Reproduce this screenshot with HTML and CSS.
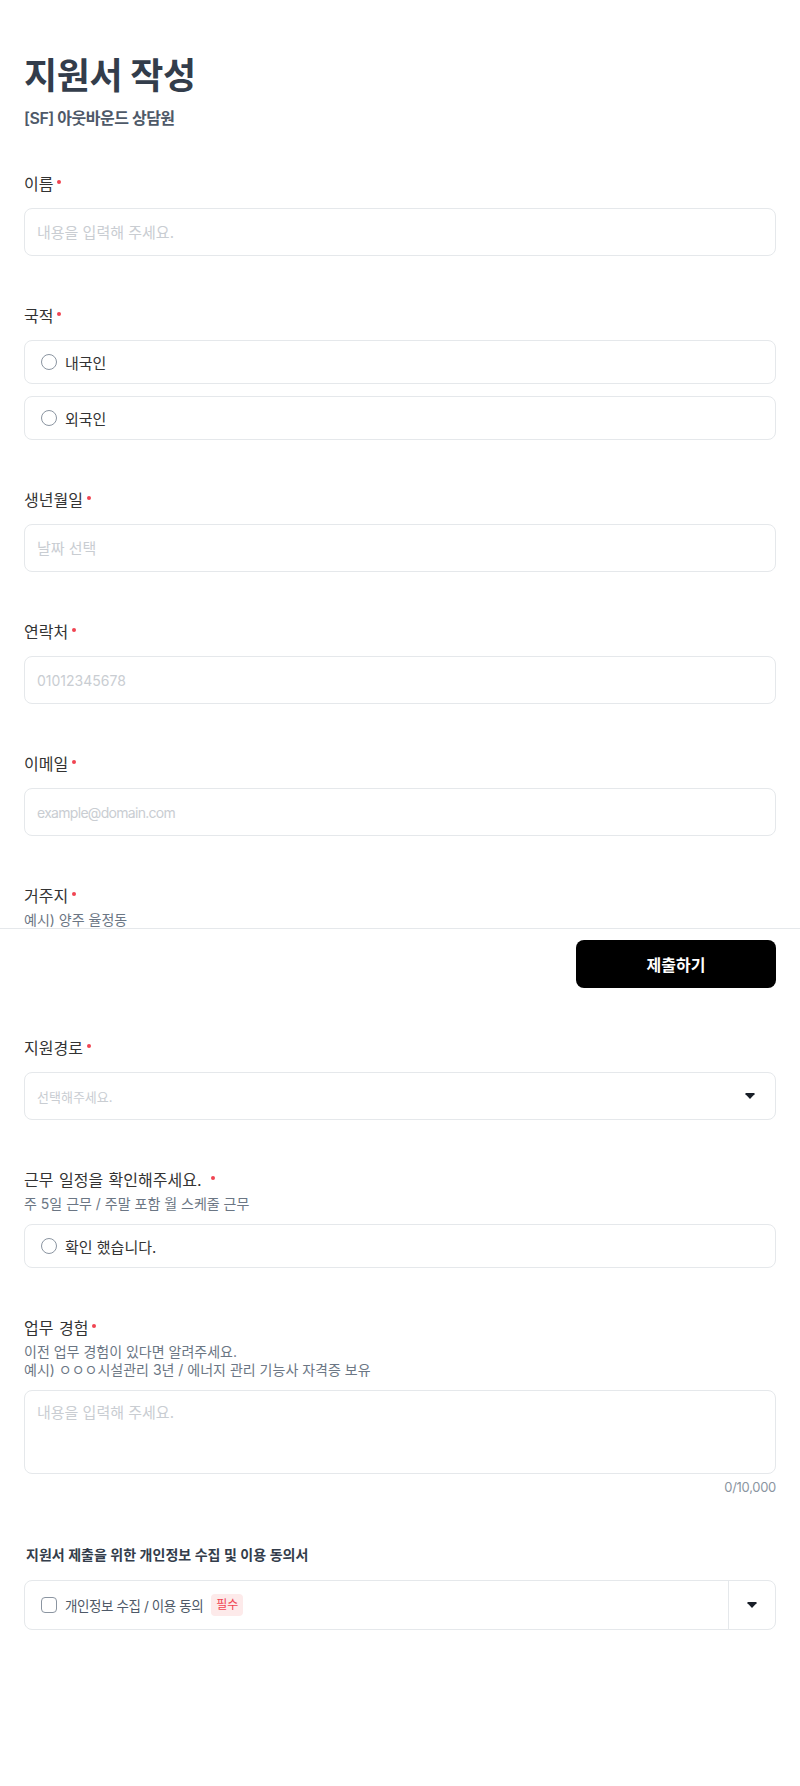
FILE: index.html
```html
<html lang="ko">
<head>
  <meta charset="UTF-8">
  <meta name="viewport" content="width=device-width, initial-scale=1.0">
  <title>지원서 작성</title>
  <link rel="stylesheet" href="styles.css">
</head>
<body>
  <div class="page">
    <header class="head">
      <h1 class="title">지원서 작성</h1>
      <p class="subtitle">[SF] 아웃바운드 상담원</p>
    </header>

    <form class="form">
      <!-- 이름 -->
      <div class="field">
        <div class="label">이름<span class="req"></span></div>
        <input class="input" type="text" placeholder="내용을 입력해 주세요.">
      </div>

      <!-- 국적 -->
      <div class="field">
        <div class="label">국적<span class="req"></span></div>
        <div class="options">
          <label class="option"><span class="radio"></span>내국인</label>
          <label class="option"><span class="radio"></span>외국인</label>
        </div>
      </div>

      <!-- 생년월일 -->
      <div class="field">
        <div class="label">생년월일<span class="req"></span></div>
        <input class="input" type="text" placeholder="날짜 선택">
      </div>

      <!-- 연락처 -->
      <div class="field">
        <div class="label">연락처<span class="req"></span></div>
        <input class="input input-latin" type="text" placeholder="01012345678">
      </div>

      <!-- 이메일 -->
      <div class="field">
        <div class="label">이메일<span class="req"></span></div>
        <input class="input input-latin input-email" type="text" placeholder="example@domain.com">
      </div>

      <!-- 거주지 (submit bar sits on top of it) -->
      <div class="field field-address">
        <div class="label">거주지<span class="req"></span></div>
        <p class="help">예시) 양주 율정동</p>
        <input class="input" type="text" placeholder="내용을 입력해 주세요.">
        <div class="action-bar">
          <button type="button" class="submit">제출하기</button>
        </div>
      </div>

      <!-- 지원경로 -->
      <div class="field">
        <div class="label">지원경로<span class="req"></span></div>
        <div class="select">
          <span class="select-text">선택해주세요.</span>
          <svg class="caret" width="10" height="6" viewBox="0 0 10 6"><path d="M0.5 0h9v1.2L5 6 0.5 1.2z"/></svg>
        </div>
      </div>

      <!-- 근무 일정 -->
      <div class="field">
        <div class="label">근무 일정을 확인해주세요. <span class="req"></span></div>
        <p class="help">주 5일 근무 / 주말 포함 월 스케줄 근무</p>
        <div class="options">
          <label class="option"><span class="radio"></span>확인 했습니다.</label>
        </div>
      </div>

      <!-- 업무 경험 -->
      <div class="field field-last">
        <div class="label">업무 경험<span class="req"></span></div>
        <p class="help">이전 업무 경험이 있다면 알려주세요.<br>예시) ㅇㅇㅇ시설관리 3년 / 에너지 관리 기능사 자격증 보유</p>
        <textarea class="textarea" placeholder="내용을 입력해 주세요."></textarea>
        <div class="counter">0/10,000</div>
      </div>

      <!-- 개인정보 동의 -->
      <section class="agree">
        <h2 class="agree-title">지원서 제출을 위한 개인정보 수집 및 이용 동의서</h2>
        <div class="agree-box">
          <label class="agree-check">
            <span class="checkbox"></span>
            개인정보 수집 / 이용 동의
            <span class="badge">필수</span>
          </label>
          <div class="agree-toggle">
            <svg class="caret" width="10" height="6" viewBox="0 0 10 6"><path d="M0.5 0h9v1.2L5 6 0.5 1.2z"/></svg>
          </div>
        </div>
      </section>
    </form>
  </div>
</body>
</html>
```

FILE: styles.css
```css
/* General */
body {
  margin: 0;
  background: #fff;
  font-family: Inter, "Noto Sans CJK KR", sans-serif;
  color: #333d4b;
}

.page {
  padding: 54px 24px 160px;
}

/* Header */
.title {
  margin: 0;
  font-size: 36px;
  line-height: 44px;
  font-weight: 700;
  letter-spacing: -0.4px;
  color: #333d4b;
}

.subtitle {
  margin: 8px 0 42px;
  font-size: 16px;
  line-height: 24px;
  font-weight: 600;
  letter-spacing: -0.5px;
  color: #4e5968;
}

/* Fields */
.field {
  position: relative;
  margin-bottom: 48px;
}

.label {
  font-size: 16px;
  line-height: 24px;
  font-weight: 400;
  word-spacing: 1px;
  color: #333;
  margin-bottom: 12px;
}

.req {
  display: inline-block;
  width: 4px;
  height: 4px;
  margin: 8px 0 0 4px;
  border-radius: 50%;
  background: #f04452;
  vertical-align: top;
}

.help {
  margin: -9px 0 11px;
  font-size: 14px;
  line-height: 18px;
  color: #6b7684;
}

.input, .textarea {
  display: block;
  box-sizing: border-box;
  width: 100%;
  height: 48px;
  padding: 0 12px;
  border: 1px solid #e5e8eb;
  border-radius: 8px;
  background: #fff;
  font-family: inherit;
  font-size: 15px;
  color: #333d4b;
  outline: none;
}

.input-latin {
  font-size: 14px;
}

.input-email {
  letter-spacing: -0.7px;
}

.textarea {
  height: 84px;
  padding: 12px;
  line-height: 20px;
  resize: none;
}

.input::placeholder, .textarea::placeholder {
  color: #c9cdd2;
}

.counter {
  margin-top: 4px;
  text-align: right;
  font-size: 13px;
  line-height: 18px;
  letter-spacing: -0.3px;
  color: #8b95a1;
}

/* Radio options */
.options {
  display: flex;
  flex-direction: column;
  gap: 12px;
}

.option {
  display: flex;
  align-items: center;
  gap: 8px;
  height: 44px;
  box-sizing: border-box;
  padding: 0 16px;
  border: 1px solid #e5e8eb;
  border-radius: 8px;
  font-size: 15px;
  color: #333;
}

.radio {
  width: 16px;
  height: 16px;
  box-sizing: border-box;
  border: 1.5px solid #8b95a1;
  border-radius: 50%;
}

/* Select */
.select {
  display: flex;
  align-items: center;
  justify-content: space-between;
  height: 48px;
  box-sizing: border-box;
  padding: 0 20px 0 12px;
  border: 1px solid #e5e8eb;
  border-radius: 8px;
  font-size: 13px;
  color: #c9cdd2;
}

.caret {
  fill: #191f28;
}

.action-bar {
  position: absolute;
  top: 44px;
  left: -24px;
  right: -24px;
  display: flex;
  justify-content: flex-end;
  padding: 11px 24px 12px;
  background: #fff;
  border-top: 1px solid #e5e8eb;
}

.submit {
  width: 200px;
  height: 48px;
  border: none;
  border-radius: 8px;
  background: #000;
  color: #fff;
  font-family: inherit;
  font-size: 16px;
  font-weight: 700;
  cursor: pointer;
}

/* Agreement */
.field-last {
  margin-bottom: 49px;
}

.agree-title {
  margin: 0 0 15px;
  padding-left: 2px;
  font-size: 14px;
  line-height: 20px;
  font-weight: 600;
  color: #333d4b;
}

.agree-box {
  display: flex;
  height: 50px;
  box-sizing: border-box;
  border: 1px solid #e5e8eb;
  border-radius: 8px;
}

.agree-check {
  flex: 1;
  display: flex;
  align-items: center;
  gap: 8px;
  padding: 0 16px;
  font-size: 13.5px;
  letter-spacing: -0.4px;
  color: #4e5968;
}

.checkbox {
  width: 16px;
  height: 16px;
  box-sizing: border-box;
  border: 1.5px solid #8b95a1;
  border-radius: 4px;
}

.badge {
  height: 22px;
  padding: 0 5px;
  border-radius: 4px;
  background: #fdeaea;
  color: #f04452;
  font-size: 12px;
  line-height: 22px;
  letter-spacing: 0;
}

.agree-toggle {
  display: flex;
  align-items: center;
  justify-content: center;
  width: 46px;
  border-left: 1px solid #e5e8eb;
}
```
